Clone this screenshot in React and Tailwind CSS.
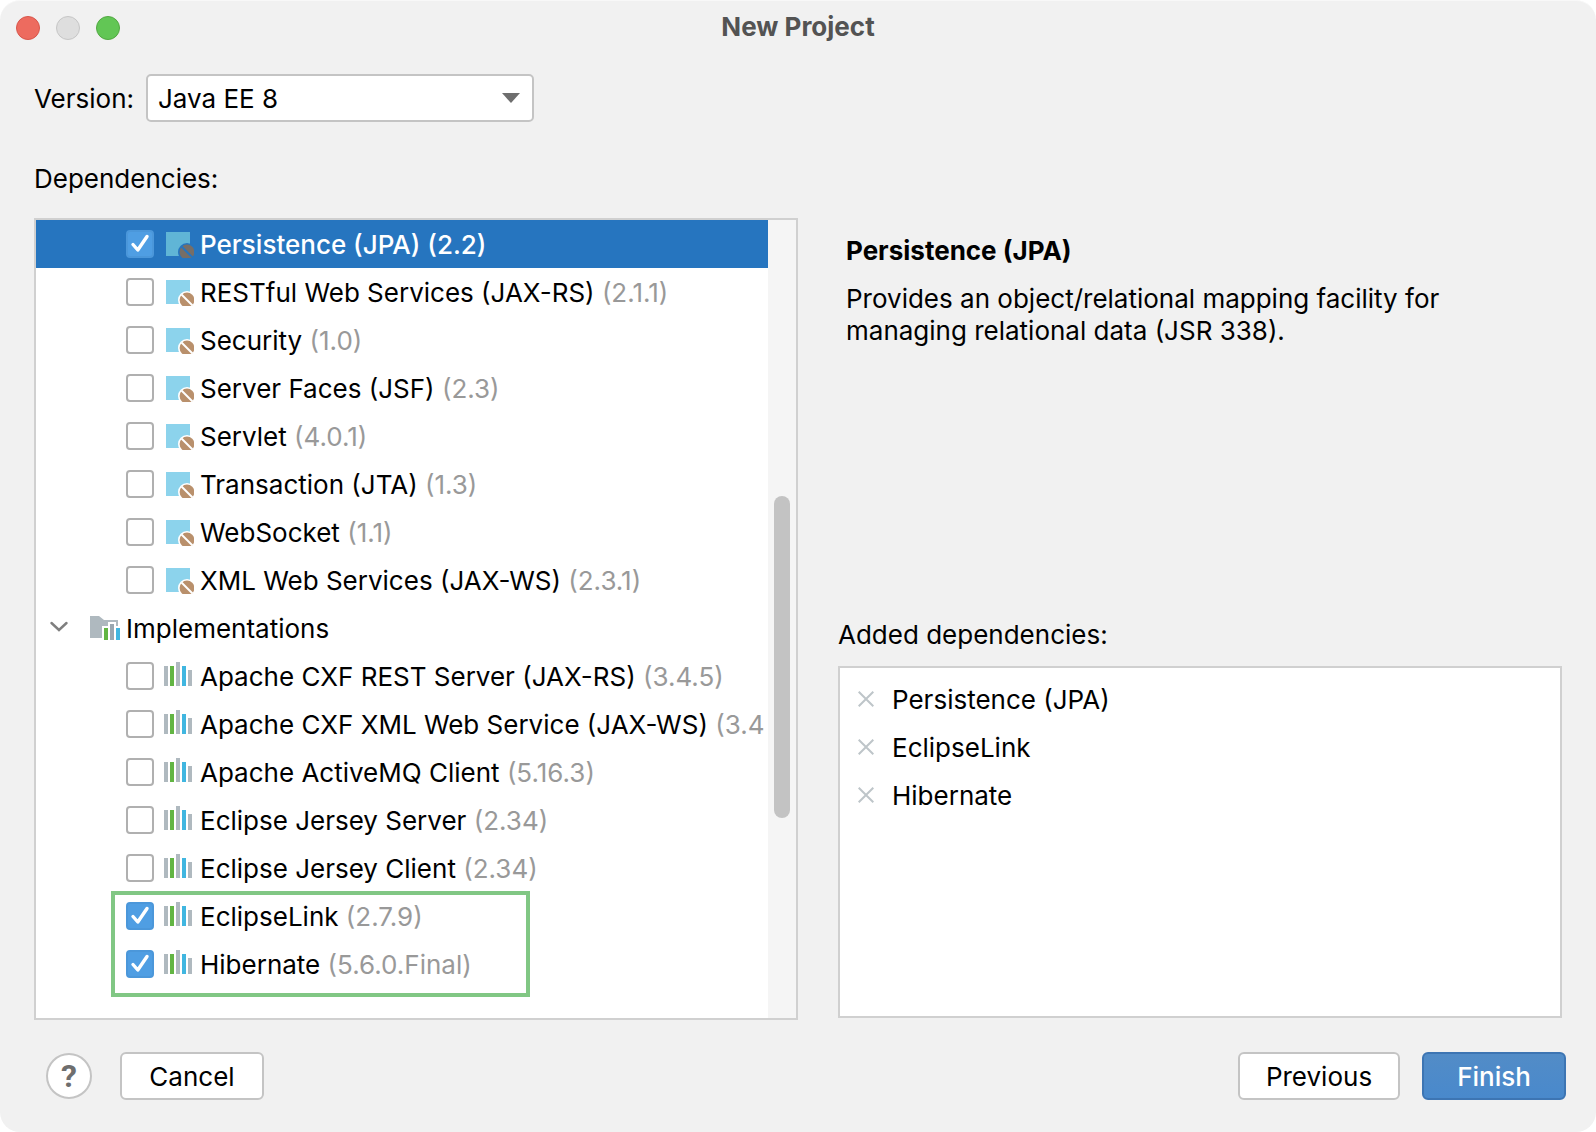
import React, { useState } from 'react';

const specifications = [
  { name: 'Persistence (JPA)', version: '(2.2)', checked: true, selected: true },
  { name: 'RESTful Web Services (JAX-RS)', version: '(2.1.1)' },
  { name: 'Security', version: '(1.0)' },
  { name: 'Server Faces (JSF)', version: '(2.3)' },
  { name: 'Servlet', version: '(4.0.1)' },
  { name: 'Transaction (JTA)', version: '(1.3)' },
  { name: 'WebSocket', version: '(1.1)' },
  { name: 'XML Web Services (JAX-WS)', version: '(2.3.1)' },
];

const implementations = [
  { name: 'Apache CXF REST Server (JAX-RS)', version: '(3.4.5)' },
  { name: 'Apache CXF XML Web Service (JAX-WS)', version: '(3.4' },
  { name: 'Apache ActiveMQ Client', version: '(5.16.3)' },
  { name: 'Eclipse Jersey Server', version: '(2.34)' },
  { name: 'Eclipse Jersey Client', version: '(2.34)' },
];

const highlighted = [
  { name: 'EclipseLink', version: '(2.7.9)', checked: true },
  { name: 'Hibernate', version: '(5.6.0.Final)', checked: true },
];

const added = ['Persistence (JPA)', 'EclipseLink', 'Hibernate'];

const SpecIcon = ({ selected }) => (
  <svg className="w-8 h-7 shrink-0" viewBox="0 0 32 28" aria-hidden="true">
    <rect x="4" y="2" width="24" height="24" fill={selected ? '#60B5D6' : '#8CD3EC'} />
    <circle cx="25" cy="22" r="9" fill={selected ? '#2675BF' : '#fff'} />
    <circle cx="25" cy="22" r="7.4" fill={selected ? '#776E67' : '#B9906C'} />
    <path d="M19.5 16.5 L30.5 27.5" stroke={selected ? '#2675BF' : '#fff'} strokeWidth="2" />
  </svg>
);

const LibraryIcon = () => (
  <svg className="w-8 h-7 shrink-0" viewBox="0 0 32 28" shapeRendering="crispEdges" aria-hidden="true">
    <path d="M2 4h4v20H2z M14 0h4v24h-4z M26 8h4v16h-4z" fill="#AFB9BF" />
    <path d="M8 4h4v20H8z" fill="#62B543" />
    <path d="M20 4h4v20h-4z" fill="#40B6E0" />
  </svg>
);

const FolderIcon = () => (
  <svg className="w-8 h-7 shrink-0" viewBox="0 0 32 28" aria-hidden="true">
    <path d="M0 2h9l5 4h14v18H0z" fill="#AFB9BF" />
    <path d="M12 12h6V8h8v4h6v16H12z" fill="#fff" />
    <path d="M14 14h4v12h-4z" fill="#62B543" />
    <path d="M20 10h4v16h-4z" fill="#9AA7B0" />
    <path d="M26 14h4v12h-4z" fill="#40B6E0" />
  </svg>
);

const Tick = () => (
  <svg
    className="pointer-events-none hidden peer-checked:block col-start-1 row-start-1 w-7 h-7"
    viewBox="0 0 28 28"
    fill="none"
    aria-hidden="true"
  >
    <path d="M7 14.5 L11.8 20 L21 6.5" stroke="#fff" strokeWidth="3.4" strokeLinecap="round" strokeLinejoin="round" />
  </svg>
);

const DependencyRow = ({ item, icon }) => {
  const [checked, setChecked] = useState(Boolean(item.checked));

  return (
    <li className={item.selected ? 'bg-[#2675BF] font-medium text-white' : ''}>
      <label className="flex items-center h-12 pl-[90px] whitespace-pre">
        <span className="grid shrink-0">
          <input
            type="checkbox"
            checked={checked}
            onChange={(e) => setChecked(e.target.checked)}
            className="peer col-start-1 row-start-1 appearance-none w-7 h-7 rounded border-2 border-[#B0B0B0] bg-white checked:border-[#4B97DA] checked:bg-[#4F9EE3]"
          />
          <Tick />
        </span>
        <span className="ml-2 mr-[6px]">{icon}</span>
        <span className="pt-[2px]">
          {item.name} <span className={item.selected ? '' : 'text-[#999999]'}>{item.version}</span>
        </span>
      </label>
    </li>
  );
};

const App = () => {
  return (
    <div className="min-h-screen bg-white">
      <main className="min-h-screen flex flex-col rounded-[20px] bg-[#F1F1F1] border-t border-[#F8F8F8] font-['Inter',sans-serif] text-[26px] leading-8 text-black">
        {/* Title bar */}
        <header className="grid grid-cols-[1fr_auto_1fr] items-center h-[54px] px-4">
          <div className="flex gap-4">
            <button aria-label="Close" className="w-6 h-6 rounded-full border border-[#D8564B] bg-[#ED6B5F]" />
            <button aria-label="Minimize" className="w-6 h-6 rounded-full border border-[#C6C6C6] bg-[#DEDEDE]" />
            <button aria-label="Zoom" className="w-6 h-6 rounded-full border border-[#52A842] bg-[#62C655]" />
          </div>
          <h1 className="pb-[2px] font-bold text-[#535353]">New Project</h1>
        </header>

        <div className="flex items-center gap-3 mt-[19px] pl-[34px]">
          <label htmlFor="version" className="w-[100px] pt-[2px]">Version:</label>
          <div className="grid items-center w-[388px]">
            <select
              id="version"
              className="col-start-1 row-start-1 appearance-none w-full h-12 pt-[2px] pl-[10px] rounded-[5px] border-2 border-[#C4C4C4] bg-white"
            >
              <option>Java EE 8</option>
            </select>
            <svg
              className="pointer-events-none col-start-1 row-start-1 justify-self-end mr-[14px] w-[18px] h-[10px]"
              viewBox="0 0 18 10"
              aria-hidden="true"
            >
              <path d="M0 0h18l-9 10z" fill="#6E6E6E" />
            </svg>
          </div>
        </div>

        <h2 className="mt-[41px] pl-[34px]">Dependencies:</h2>

        <div className="grid grid-cols-[764fr_724fr] gap-10 mt-[23px] px-[34px]">
          {/* Dependency tree */}
          <section className="flex min-w-0 h-[802px] border-2 border-[#D0D0D0] bg-white">
            <div className="flex-1 min-w-0 overflow-hidden">
              <ul>
                {specifications.map((item) => (
                  <DependencyRow key={item.name} item={item} icon={<SpecIcon selected={item.selected} />} />
                ))}
              </ul>
              <div className="flex items-center h-12 pl-[14px]">
                <svg className="w-5 h-5 mr-5 shrink-0" viewBox="0 0 20 20" fill="none" aria-hidden="true">
                  <path d="M1.5 5 L9 12 L16.5 5" stroke="#7F7F7F" strokeWidth="2.4" strokeLinecap="round" />
                </svg>
                <FolderIcon />
                <span className="ml-1 pt-[2px]">Implementations</span>
              </div>
              <ul>
                {implementations.map((item) => (
                  <DependencyRow key={item.name} item={item} icon={<LibraryIcon />} />
                ))}
              </ul>
              <div className="relative">
                <ul>
                  {highlighted.map((item) => (
                    <DependencyRow key={item.name} item={item} icon={<LibraryIcon />} />
                  ))}
                </ul>
                <div className="pointer-events-none absolute -top-px -bottom-[9px] left-[75px] w-[419px] border-4 border-[#81C784]" />
              </div>
            </div>
            <div className="w-7 pt-[276px] pl-[6px] bg-[#F5F5F5]">
              <div className="w-4 h-[322px] rounded-full bg-[#C3C3C3]" />
            </div>
          </section>

          <section className="flex flex-col min-w-0 pb-[2px]">
            <div className="flex-1 pt-[17px] pl-2">
              <h3 className="font-bold">Persistence (JPA)</h3>
              <p className="mt-4 max-w-[620px]">
                Provides an object/relational mapping facility for managing relational data (JSR 338).
              </p>
            </div>
            <h2>Added dependencies:</h2>
            <ul className="h-[352px] mt-[15px] pt-[7px] pl-[18px] border-2 border-[#D0D0D0] bg-white">
              {added.map((name) => (
                <li key={name} className="flex items-center gap-[18px] h-12">
                  <button aria-label={`Remove ${name}`}>
                    <svg className="w-4 h-4" viewBox="0 0 16 16" fill="none" aria-hidden="true">
                      <path d="M0.7 0.7 L15.3 15.3 M15.3 0.7 L0.7 15.3" stroke="#BEC5C9" strokeWidth="2" />
                    </svg>
                  </button>
                  <span className="pt-[2px]">{name}</span>
                </li>
              ))}
            </ul>
          </section>
        </div>

        {/* Buttons */}
        <footer className="flex items-center mt-8 pl-[46px] pr-[30px] pb-8">
          <button
            aria-label="Help"
            className="w-[46px] h-[46px] rounded-full border-2 border-[#C4C4C4] bg-white font-['Roboto',sans-serif] text-[32px] font-bold text-[#6E6E6E]"
          >
            ?
          </button>
          <button className="w-36 h-12 ml-7 pt-[2px] rounded-md border-2 border-[#C4C4C4] bg-white">Cancel</button>
          <button className="w-[162px] h-12 ml-auto pt-[2px] rounded-md border-2 border-[#C4C4C4] bg-white">Previous</button>
          <button className="w-36 h-12 ml-[22px] pt-[2px] rounded-md border-2 border-[#3D75B3] bg-linear-to-b from-[#528CC7] to-[#4989CC] font-medium text-white">
            Finish
          </button>
        </footer>
      </main>
    </div>
  );
};

export default App;
